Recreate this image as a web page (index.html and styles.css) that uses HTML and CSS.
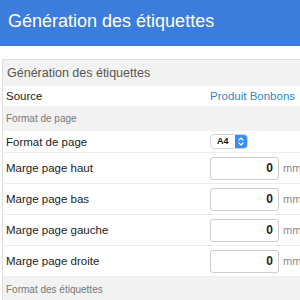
FILE: index.html
```html
<!DOCTYPE html>
<html lang="fr">

<head>
    <meta charset="UTF-8">
    <meta name="viewport" content="width=device-width, initial-scale=1.0">
    <title>Génération des étiquettes</title>
    <link rel="stylesheet" href="styles.css">
</head>

<body>
    <!-- barre du haut -->
    <header class="topbar">Génération des étiquettes</header>

    <!-- panneau principal -->
    <div class="panel">
        <div class="panelTitle">Génération des étiquettes</div>

        <div class="row rowSource">
            <span class="label">Source</span>
            <a class="link" href="#">Produit Bonbons</a>
        </div>

        <!-- format de page -->
        <div class="section">Format de page</div>
        <div class="row rowSelect">
            <span class="label">Format de page</span>
            <div class="select">
                <span class="selectValue">A4</span>
                <span class="stepper">
                    <svg width="8" height="11" viewBox="0 0 8 11">
                        <path d="M1.6 4.4 L4 2 L6.4 4.4" fill="none" stroke="#fff" stroke-width="1.2" />
                        <path d="M1.6 6.6 L4 9 L6.4 6.6" fill="none" stroke="#fff" stroke-width="1.2" />
                    </svg>
                </span>
            </div>
        </div>
        <div class="row rowField">
            <span class="label">Marge page haut</span>
            <div class="field"><input class="num" type="text" value="0"><span class="unit">mm</span></div>
        </div>
        <div class="row rowField">
            <span class="label">Marge page bas</span>
            <div class="field"><input class="num" type="text" value="0"><span class="unit">mm</span></div>
        </div>
        <div class="row rowField">
            <span class="label">Marge page gauche</span>
            <div class="field"><input class="num" type="text" value="0"><span class="unit">mm</span></div>
        </div>
        <div class="row rowField">
            <span class="label">Marge page droite</span>
            <div class="field"><input class="num" type="text" value="0"><span class="unit">mm</span></div>
        </div>

        <!-- format des étiquettes -->
        <div class="section">Format des étiquettes</div>
    </div>
</body>

</html>
```

FILE: styles.css
```css
* {
    margin: 0;
    padding: 0;
    box-sizing: border-box;
}

body {
    width: 300px;
    height: 300px;
    overflow: hidden;
    background: #fff;
    font-family: "Liberation Sans", Arial, sans-serif;
}

.topbar {
    height: 46px;
    line-height: 42px;
    padding-left: 8px;
    background: #3b7ddd;
    color: #fff;
    font-size: 18px;
    white-space: nowrap;
}

.panel {
    width: 330px;
    margin: 13px 0 0 2px;
    border: 1px solid #dedede;
    border-right: none;
}

.panelTitle {
    height: 26px;
    line-height: 26px;
    padding-left: 4px;
    background: #f2f2f2;
    color: #555;
    font-size: 12.5px;
}

.row {
    display: grid;
    grid-template-columns: 204px auto;
    align-items: center;
    padding-left: 3px;
    font-size: 11.5px;
    color: #222;
}

.rowSource {
    height: 20px;
}

.link {
    color: #2a88cf;
    text-decoration: none;
}

.section {
    height: 25px;
    line-height: 25px;
    padding-left: 3px;
    background: #f2f2f2;
    color: #777;
    font-size: 10px;
}

.rowSelect {
    height: 22px;
    border-bottom: 1px solid #eee;
}

.rowField {
    height: 31px;
    border-bottom: 1px solid #eee;
}

.rowField:last-of-type {
    border-bottom: none;
}

.select {
    display: flex;
    align-items: stretch;
    width: 38px;
    height: 15px;
    border: 1px solid #d4d4d4;
    border-radius: 4px;
    overflow: hidden;
    background: #fff;
}

.selectValue {
    flex: 1;
    padding-left: 6px;
    line-height: 13px;
    font-size: 9px;
    font-weight: bold;
    color: #111;
}

.stepper {
    width: 12px;
    display: flex;
    align-items: center;
    justify-content: center;
    background: #3d8ef3;
}

.field {
    display: flex;
    align-items: center;
    gap: 4px;
}

.num {
    width: 69px;
    height: 23px;
    padding-right: 5px;
    border: 1px solid #ccc;
    border-radius: 3px;
    text-align: right;
    font-family: "Liberation Sans", Arial, sans-serif;
    font-size: 12px;
    font-weight: bold;
    color: #222;
    outline: none;
}

.unit {
    color: #888;
    font-size: 11px;
}
```
